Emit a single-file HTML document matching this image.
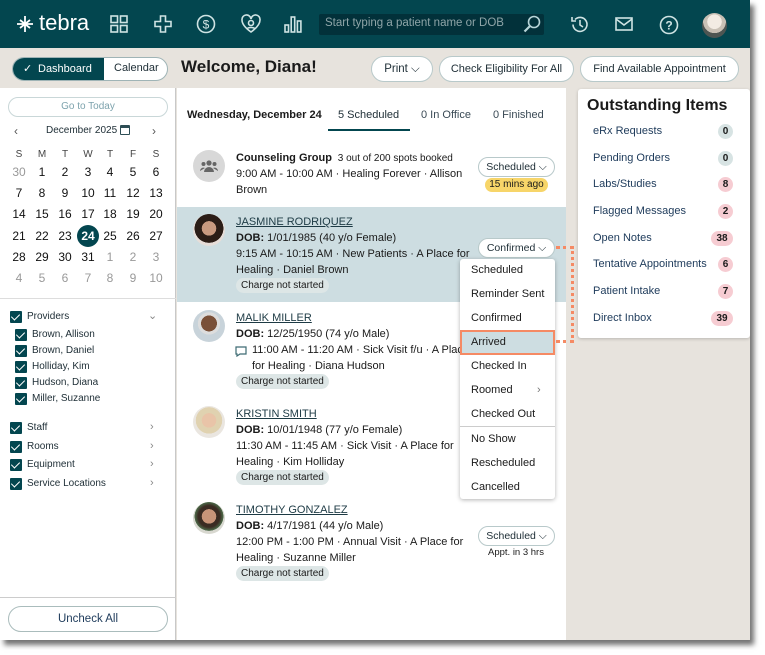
<!DOCTYPE html>
<html><head><meta charset="utf-8"><style>
*{box-sizing:border-box;margin:0;padding:0}
body{width:765px;height:655px;background:#fff;font-family:"Liberation Sans",sans-serif;color:#1a1a1a;position:relative;overflow:hidden}
.a{position:absolute;white-space:nowrap}
#frame{position:absolute;left:0;top:0;width:750px;height:640px;background:#e7e3dd;box-shadow:4px 5px 5px rgba(0,0,0,.55);overflow:hidden}
#hdr{position:absolute;left:0;top:0;width:750px;height:48px;background:#03464f}
.ic{position:absolute;stroke:#cfe3e3;fill:none;stroke-width:1.6}
.pill{position:absolute;border:1px solid #b8c9ca;border-radius:14px;background:#fff;font-size:11.5px;text-align:center;color:#1d2d35}
.cal{position:absolute;width:22px;text-align:center;font-size:12px}
.cb{position:absolute;width:12px;height:12px;background:#03464f;border-radius:1px}
.cb:after{content:"";position:absolute;left:3px;top:1px;width:4px;height:7px;border:solid #fff;border-width:0 1.5px 1.5px 0;transform:rotate(45deg)}
.lbl{position:absolute;font-size:10px;color:#1d2d35}
.chev{position:absolute;font-size:11px;color:#888}
.av{position:absolute;left:193px;width:32px;height:32px;border-radius:50%}
.nm{position:absolute;left:236px;font-size:11px;color:#1d3a44;text-decoration:underline}
.t{position:absolute;left:236px;font-size:11px;white-space:nowrap}
.chg{position:absolute;left:236px;height:15px;padding:0 5px;background:#dde6e6;border-radius:8px;font-size:10px;line-height:15px}
.mi{position:absolute;left:471px;font-size:11px}
.oi{position:absolute;left:593px;font-size:11px;color:#1d3a5a}
.bd{position:absolute;height:15px;border-radius:8px;font-size:10px;line-height:15px;text-align:center;font-weight:bold}
.g{background:#d7e3e3;width:15px;left:718px}
.r{background:#f6ccd2;width:15px;left:718px}
.r2{background:#f6ccd2;width:22px;left:711px}
.dot{position:absolute;border-color:#f58a64;border-style:dotted;border-width:0}
</style></head><body>
<div id="frame">
<div id="hdr">
 <svg class="a" style="left:15px;top:14px" width="20" height="20" viewBox="0 0 20 20"><path d="M10 2v16M2 10h16M5 6l5 4 5-4M5 14l5-4 5 4" stroke="#fff" stroke-width="1.8" fill="none"/></svg>
 <div class="a" style="left:39px;top:10px;font-size:22px;color:#fff">tebra</div>
 <svg class="ic" style="left:110px;top:15px" width="18" height="18"><rect x="1" y="1" width="6.5" height="6.5"/><rect x="10.5" y="1" width="6.5" height="6.5"/><rect x="1" y="10.5" width="6.5" height="6.5"/><rect x="10.5" y="10.5" width="6.5" height="6.5"/></svg>
 <svg class="ic" style="left:154px;top:15px" width="18" height="18"><path d="M6.5 1h5v5.5H17v5h-5.5V17h-5v-5.5H1v-5h5.5z"/></svg>
 <svg class="ic" style="left:196px;top:14px" width="20" height="20"><circle cx="10" cy="10" r="8.5"/><text x="10" y="14.5" font-size="12" text-anchor="middle" fill="#cfe3e3" stroke="none" font-family="Liberation Sans">$</text></svg>
 <svg class="ic" style="left:241px;top:14px" width="20" height="20"><path d="M10 18C3 13 1 9 1 6a4.5 4.5 0 0 1 9-1 4.5 4.5 0 0 1 9 1c0 3-2 7-9 12z"/><circle cx="10" cy="9" r="2.5"/><path d="M6 15c1-2 7-2 8 0"/></svg>
 <svg class="ic" style="left:284px;top:15px" width="18" height="18"><rect x="1" y="10" width="3.5" height="7"/><rect x="7.2" y="2" width="3.5" height="15"/><rect x="13.4" y="6" width="3.5" height="11"/></svg>
 <div class="a" style="left:319px;top:14px;width:225px;height:21px;background:#02313a;border-radius:2px"></div>
 <div class="a" style="left:325px;top:17px;font-size:11.5px;color:#8fa5a8">Start typing a patient name or DOB</div>
 <svg class="ic" style="left:523px;top:15px;stroke:#b8d5d8" width="18" height="18"><circle cx="11" cy="7" r="5.5"/><path d="M7 11l-5.5 5.5" stroke-width="2.2"/></svg>
 <svg class="ic" style="left:570px;top:15px" width="19" height="19"><path d="M3 9.5A7 7 0 1 0 5 4.5M2 2v4h4"/><path d="M10 5v5l3 2"/></svg>
 <svg class="ic" style="left:615px;top:17px" width="18" height="15"><rect x="1" y="1" width="16" height="12"/><path d="M1 2l8 6 8-6"/></svg>
 <svg class="ic" style="left:659px;top:15px" width="20" height="20"><circle cx="10" cy="10" r="8.5"/><text x="10" y="14.5" font-size="12" font-weight="bold" text-anchor="middle" fill="#cfe3e3" stroke="none" font-family="Liberation Sans">?</text></svg>
 <div class="a" style="left:702px;top:13px;width:25px;height:25px;border-radius:50%;background:radial-gradient(circle at 50% 35%,#f3ebe3 0 35%,#c9c0b5 36% 55%,#4e5552 56%)"></div>
</div>
<div class="a" style="left:12px;top:57px;width:156px;height:24px;border:1px solid #9fb4b6;border-radius:12px;background:#fff;overflow:hidden">
 <div class="a" style="left:0;top:0;width:91px;height:24px;background:#03464f;color:#fff;font-size:11px;line-height:22px;padding-left:25px">Dashboard</div>
 <div class="a" style="left:10px;top:4px;color:#fff;font-size:11px">✓</div>
 <div class="a" style="left:101px;top:4px;font-size:11px;color:#1d2d35">Calendar</div>
</div>
<div class="a" style="left:181px;top:57px;font-size:17px;font-weight:bold">Welcome, Diana!</div>
<div class="pill" style="left:371px;top:56px;width:62px;height:26px;line-height:24px">Print ⌵</div>
<div class="pill" style="left:439px;top:56px;width:135px;height:26px;line-height:24px;font-size:11px">Check Eligibility For All</div>
<div class="pill" style="left:580px;top:56px;width:159px;height:26px;line-height:24px;font-size:11px">Find Available Appointment</div>
<div class="a" style="left:0;top:88px;width:176px;height:552px;background:#fff;border-right:1px solid #c8c8c8"></div>
<div class="a" style="left:8px;top:97px;width:160px;height:20px;border:1px solid #c9d7d8;border-radius:10px;font-size:10px;color:#7da3ad;text-align:center;line-height:18px">Go to Today</div>
<div class="a" style="left:14px;top:124px;font-size:12px;color:#555">‹</div>
<div class="a" style="left:152px;top:124px;font-size:12px;color:#555">›</div>
<div class="a" style="left:46px;top:125px;font-size:10px;color:#1d2d35">December 2025</div>
<div class="a" style="left:120px;top:125px;width:10px;height:10px;border:1.5px solid #2d4e55;border-top-width:3px;border-radius:1px"></div>
<div id="cal"></div>
<div class="a" style="left:0;top:298px;width:176px;border-top:1px solid #ddd"></div>
<div class="cb" style="left:10px;top:311px"></div><div class="lbl" style="left:27px;top:311px">Providers</div><div class="chev" style="left:148px;top:309px">⌄</div>
<div class="cb" style="left:15px;top:329px"></div><div class="lbl" style="left:32px;top:329px">Brown, Allison</div>
<div class="cb" style="left:15px;top:345px"></div><div class="lbl" style="left:32px;top:345px">Brown, Daniel</div>
<div class="cb" style="left:15px;top:361px"></div><div class="lbl" style="left:32px;top:361px">Holliday, Kim</div>
<div class="cb" style="left:15px;top:377px"></div><div class="lbl" style="left:32px;top:377px">Hudson, Diana</div>
<div class="cb" style="left:15px;top:393px"></div><div class="lbl" style="left:32px;top:393px">Miller, Suzanne</div>
<div class="cb" style="left:10px;top:422px"></div><div class="lbl" style="left:27px;top:422px">Staff</div><div class="chev" style="left:150px;top:421px">›</div>
<div class="cb" style="left:10px;top:441px"></div><div class="lbl" style="left:27px;top:441px">Rooms</div><div class="chev" style="left:150px;top:440px">›</div>
<div class="cb" style="left:10px;top:459px"></div><div class="lbl" style="left:27px;top:459px">Equipment</div><div class="chev" style="left:150px;top:458px">›</div>
<div class="cb" style="left:10px;top:478px"></div><div class="lbl" style="left:27px;top:478px">Service Locations</div><div class="chev" style="left:150px;top:477px">›</div>
<div class="a" style="left:0;top:597px;width:176px;border-top:1px solid #ccc"></div>
<div class="a" style="left:8px;top:606px;width:160px;height:26px;border:1px solid #aabcbc;border-radius:13px;text-align:center;line-height:24px;font-size:11.5px;color:#1d3a5a">Uncheck All</div>
<div class="a" style="left:177px;top:88px;width:389px;height:552px;background:#fff"></div>
<div class="a" style="left:187px;top:109px;font-size:11px;font-weight:bold">Wednesday, December 24</div>
<div class="a" style="left:338px;top:109px;font-size:11px;color:#1d2d35">5 Scheduled</div>
<div class="a" style="left:328px;top:129px;width:82px;height:2px;background:#03464f"></div>
<div class="a" style="left:421px;top:109px;font-size:11px;color:#3a4a55">0 In Office</div>
<div class="a" style="left:493px;top:109px;font-size:11px;color:#3a4a55">0 Finished</div>
<div class="a" style="left:177px;top:207px;width:389px;height:95px;background:#cddde1"></div>
<div class="av" style="top:150px;background:#d8d8d8"></div>
<svg class="a" style="left:200px;top:159px" width="18" height="14"><circle cx="9" cy="4" r="2.6" fill="#666"/><circle cx="3.5" cy="5" r="2" fill="#666"/><circle cx="14.5" cy="5" r="2" fill="#666"/><path d="M4 13a5 5 0 0 1 10 0zM0 12a3.5 3.5 0 0 1 5-3M18 12a3.5 3.5 0 0 0-5-3" fill="#666"/></svg>
<div class="t" style="top:152px;font-weight:bold">Counseling Group <span style="font-weight:normal;font-size:10px">&nbsp;3 out of 200 spots booked</span></div>
<div class="t" style="top:168px">9:00 AM - 10:00 AM · Healing Forever · Allison</div>
<div class="t" style="top:184px">Brown</div>
<div class="pill" style="left:478px;top:157px;width:77px;height:20px;line-height:18px;font-size:10.5px">Scheduled ⌵</div>
<div class="a" style="left:485px;top:178px;width:63px;height:14px;background:#f7d569;border-radius:7px;font-size:10px;text-align:center;line-height:14px">15 mins ago</div>
<div class="av" style="top:214px;background:radial-gradient(circle at 50% 45%,#c99a80 0 30%,#2b1d17 31% 60%,#e6ddd8 61%)"></div>
<div class="nm" style="top:216px">JASMINE RODRIQUEZ</div>
<div class="t" style="top:232px"><b>DOB:</b> 1/01/1985 (40 y/o Female)</div>
<div class="t" style="top:248px">9:15 AM - 10:15 AM · New Patients · A Place for</div>
<div class="t" style="top:264px">Healing · Daniel Brown</div>
<div class="chg" style="top:278px">Charge not started</div>
<div class="pill" style="left:478px;top:238px;width:77px;height:20px;line-height:18px;font-size:10.5px">Confirmed ⌵</div>
<div class="av" style="top:310px;background:radial-gradient(circle at 50% 42%,#7a5038 0 32%,#ddd 33% 45%,#c8d3da 46%)"></div>
<div class="nm" style="top:312px">MALIK MILLER</div>
<div class="t" style="top:328px"><b>DOB:</b> 12/25/1950 (74 y/o Male)</div>
<div class="t" style="top:344px;left:252px">11:00 AM - 11:20 AM · Sick Visit f/u · A Place</div>
<svg class="a" style="left:235px;top:346px" width="12" height="11"><path d="M1 1h10v7H5l-3 2V8H1z" fill="none" stroke="#3d6b73" stroke-width="1.2"/></svg>
<div class="t" style="top:360px;left:252px">for Healing · Diana Hudson</div>
<div class="chg" style="top:374px">Charge not started</div>
<div class="av" style="top:406px;background:radial-gradient(circle at 50% 45%,#e9c4a8 0 30%,#e0d2b0 31% 55%,#eae6e0 56%)"></div>
<div class="nm" style="top:408px">KRISTIN SMITH</div>
<div class="t" style="top:424px"><b>DOB:</b> 10/01/1948 (77 y/o Female)</div>
<div class="t" style="top:440px">11:30 AM - 11:45 AM · Sick Visit · A Place for</div>
<div class="t" style="top:456px">Healing · Kim Holliday</div>
<div class="chg" style="top:470px">Charge not started</div>
<div class="av" style="top:502px;background:radial-gradient(circle at 50% 45%,#c89478 0 30%,#3a2b22 31% 45%,#4d6b4a 60%,#d8d8d0 61%)"></div>
<div class="nm" style="top:504px">TIMOTHY GONZALEZ</div>
<div class="t" style="top:520px"><b>DOB:</b> 4/17/1981 (44 y/o Male)</div>
<div class="t" style="top:536px">12:00 PM - 1:00 PM · Annual Visit · A Place for</div>
<div class="t" style="top:552px">Healing · Suzanne Miller</div>
<div class="chg" style="top:566px">Charge not started</div>
<div class="pill" style="left:478px;top:526px;width:77px;height:20px;line-height:18px;font-size:10.5px">Scheduled ⌵</div>
<div class="a" style="left:488px;top:547px;font-size:9.5px">Appt. in 3 hrs</div>
<div class="a" style="left:460px;top:259px;width:95px;height:240px;background:#fff;border-radius:3px;box-shadow:0 1px 4px rgba(0,0,0,.3)"></div>
<div class="a" style="left:460px;top:330px;width:95px;height:25px;background:#cddde1;border:2.5px solid #f58a64"></div>
<div class="a" style="left:460px;top:426px;width:95px;border-top:1px solid #ccc"></div>
<div class="mi" style="top:264px">Scheduled</div>
<div class="mi" style="top:288px">Reminder Sent</div>
<div class="mi" style="top:312px">Confirmed</div>
<div class="mi" style="top:336px">Arrived</div>
<div class="mi" style="top:360px">Checked In</div>
<div class="mi" style="top:384px">Roomed</div><div class="a" style="left:537px;top:384px;font-size:11px;color:#777">›</div>
<div class="mi" style="top:408px">Checked Out</div>
<div class="mi" style="top:433px">No Show</div>
<div class="mi" style="top:457px">Rescheduled</div>
<div class="mi" style="top:481px">Cancelled</div>
<div class="dot" style="left:556px;top:246px;width:18px;height:97px;border-width:3px 3px 3px 0"></div>
<div class="a" style="left:578px;top:89px;width:172px;height:249px;background:#fff;border-radius:3px;box-shadow:0 1px 3px rgba(0,0,0,.2)"></div>
<div class="a" style="left:587px;top:97px;font-size:16px;font-weight:bold">Outstanding Items</div>
<div class="oi" style="top:125px">eRx Requests</div><div class="bd g" style="top:124px">0</div>
<div class="oi" style="top:152px">Pending Orders</div><div class="bd g" style="top:151px">0</div>
<div class="oi" style="top:178px">Labs/Studies</div><div class="bd r" style="top:177px">8</div>
<div class="oi" style="top:205px">Flagged Messages</div><div class="bd r" style="top:204px">2</div>
<div class="oi" style="top:232px">Open Notes</div><div class="bd r2" style="top:231px">38</div>
<div class="oi" style="top:258px">Tentative Appointments</div><div class="bd r" style="top:257px">6</div>
<div class="oi" style="top:285px">Patient Intake</div><div class="bd r" style="top:284px">7</div>
<div class="oi" style="top:312px">Direct Inbox</div><div class="bd r2" style="top:311px">39</div>
</div>
<script>
var c=document.getElementById('cal'),h='',cx=[8,31,54,77,99,122,145];
['S','M','T','W','T','F','S'].forEach((d,i)=>h+='<div class="cal" style="left:'+cx[i]+'px;top:149px;font-size:10px;color:#444">'+d+'</div>');
var days=[30];for(var i=1;i<=31;i++)days.push(i);for(i=1;i<=10;i++)days.push(i);
var ys=[165,186,207,229,250,271];
days.forEach((d,k)=>{var r=Math.floor(k/7),col=k%7,grey=(k==0||k>31);
 var st='left:'+cx[col]+'px;top:'+ys[r]+'px;color:'+(grey?'#999':'#111');
 if(k==24)st+=';background:#03464f;color:#fff;border-radius:50%;height:22px;line-height:22px;font-weight:bold;margin-top:-4px';
 h+='<div class="cal" style="'+st+'">'+d+'</div>';});
c.innerHTML=h;
</script>
</body></html>
